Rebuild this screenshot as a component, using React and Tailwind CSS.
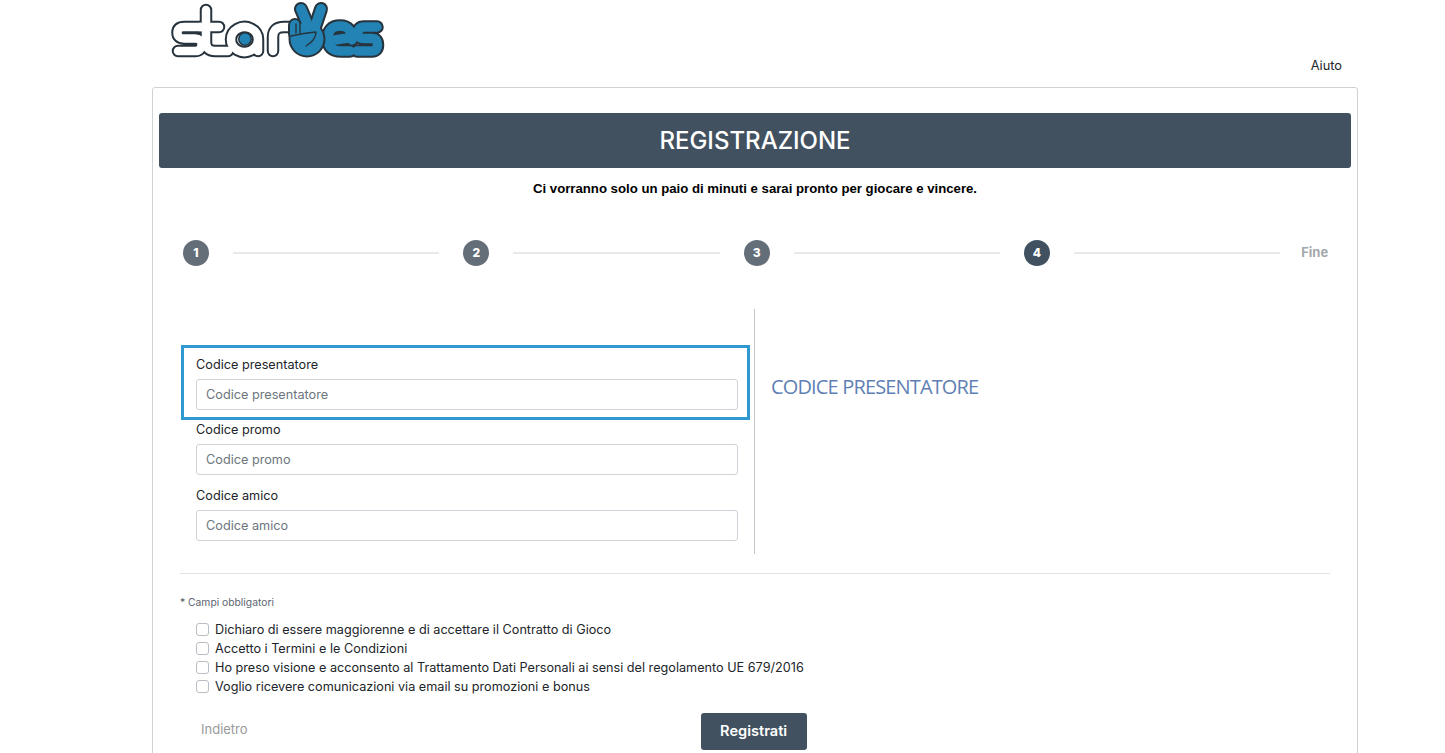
import { Fragment } from "react";

const steps = ["1", "2", "3", "4"];
const agreements = [
  "Dichiaro di essere maggiorenne e di accettare il Contratto di Gioco",
  "Accetto i Termini e le Condizioni",
  "Ho preso visione e acconsento al Trattamento Dati Personali ai sensi del regolamento UE 679/2016",
  "Voglio ricevere comunicazioni via email su promozioni e bonus",
];

function Logo() {
  const star = [
    "M201 27 H184 Q177.5 27 177.5 32.5 Q177.5 38.5 184 38.5 H195 Q201.5 38.5 201.5 44.5 Q201.5 51 195 51 H178",
    "M206 10 V42 Q206 51 215 51 H228",
    "M200 27 H219",
    "M258 39 A13.5 12.5 0 1 0 258 40 V51",
    "M273 51 V37 Q273 27 284 27 H289",
  ];
  const yes = [
    "M348 38 L328 41 M352 40 Q352 26 340 26 Q328 26 328 39 Q328 51 341 51 H350",
    "M377 27 H364 Q358 27 358 33 Q358 38.5 364 38.5 H372 Q377.5 38.5 377.5 45 Q377.5 51 372 51 H357",
  ];
  return (
    <svg width="260" height="70" viewBox="150 0 260 70" fill="none" strokeLinecap="round" strokeLinejoin="round">
      {star.map((d) => <path key={d} d={d} stroke="#27333d" strokeWidth="12.5" />)}
      {star.map((d) => <path key={d} d={d} stroke="#ffffff" strokeWidth="8.5" />)}
      <circle cx="245" cy="39" r="7" fill="#27333d" />
      <circle cx="245" cy="39" r="5.5" fill="#2383b4" />
      {yes.map((d) => <path key={d} d={d} stroke="#27333d" strokeWidth="13.5" />)}
      {yes.map((d) => <path key={d} d={d} stroke="#2383b4" strokeWidth="9.5" />)}
      <g stroke="#27333d" strokeWidth="14">
        <path d="M301 9 L310 30" />
        <path d="M321 9 L314 30" />
        <path d="M295 25 V34" />
      </g>
      <circle cx="307" cy="39" r="18.5" fill="#27333d" />
      <g stroke="#2383b4" strokeWidth="10">
        <path d="M301 9 L310 30" />
        <path d="M321 9 L314 30" />
        <path d="M295 25 V34" />
      </g>
      <circle cx="307" cy="39" r="16.5" fill="#2383b4" />
      <path d="M296 24 V33 M300 22 V33 M291 36 Q304 33 316 32 Q316 40 306 46" stroke="#27333d" strokeWidth="1.4" />
    </svg>
  );
}

function Field({ label }) {
  return (
    <>
      <label className="block text-[12.7px] leading-[20px] text-[#212529]">{label}</label>
      <input
        placeholder={label}
        className="mt-[4px] block h-[31px] w-[542px] rounded-[3px] border border-[#ced4da] bg-white px-[9px] text-[12.7px] placeholder:text-[#6c757d]"
      />
    </>
  );
}

export default function App() {
  return (
    <div className="h-[753px] overflow-hidden bg-white font-['Inter',sans-serif] text-[#212529]">
      <div className="ml-[152px] w-[1206px]">
        <div className="flex h-[87px] justify-between">
          <div className="-ml-[2px]"><Logo /></div>
          <a className="mt-[57px] mr-[16px] h-[18px] text-[12.8px] leading-[18px] text-[#212529]">Aiuto</a>
        </div>

        <div className="h-[800px] rounded-[3px] border border-[#d2d2d2] px-[6px] pt-[25px]">
          <div className="flex h-[55px] items-center justify-center rounded-[3px] bg-[#415160]">
            <h1 className="text-[24px] font-medium text-white">REGISTRAZIONE</h1>
          </div>
          <p className="mt-[12px] text-center font-['Liberation_Sans',sans-serif] text-[13.2px] leading-[17px] font-bold text-black">
            Ci vorranno solo un paio di minuti e sarai pronto per giocare e vincere.
          </p>

          <div className="mt-[43px] ml-[24px] flex h-[26px] w-[1146px] items-center">
            {steps.map((s) => (
              <Fragment key={s}>
                <span className={`flex h-[26px] w-[26px] shrink-0 items-center justify-center rounded-full text-[12px] font-extrabold text-white ${s === "4" ? "bg-[#415160]" : "bg-[#646e78]"}`}>
                  {s}
                </span>
                <span className="mr-[24px] ml-[24px] h-[2px] w-[206.3px] shrink-0 bg-[#e9e9e9]" />
              </Fragment>
            ))}
            <span className="ml-[-3px] text-[13px] font-bold text-[#a3a8ad]">Fine</span>
          </div>

          <div className="mt-[43px] ml-[22px] flex h-[245px]">
            <div className="h-full w-[574px] border-r border-[#c6c6c6] pt-[36px]">
              <div className="h-[75px] w-[569px] border-[3px] border-[#2e9ad0] pt-[7px] pl-[12px]">
                <Field label="Codice presentatore" />
              </div>
              <div className="pl-[15px]">
                <Field label="Codice promo" />
              </div>
              <div className="mt-[11px] pl-[15px]">
                <Field label="Codice amico" />
              </div>
            </div>
            <p className="mt-[64px] ml-[16px] font-['Open_Sans',sans-serif] text-[20px] leading-[27px] tracking-[-0.85px] text-[#5f7fb5]">
              CODICE PRESENTATORE
            </p>
          </div>

          <div className="mt-[19px] ml-[21px] h-px w-[1150px] bg-[#e3e3e3]" />
          <p className="mt-[22px] ml-[21px] text-[10.3px] leading-[12px] text-[#5c6670]">* Campi obbligatori</p>

          <div className="mt-[12px] ml-[37px] flex flex-col">
            {agreements.map((a) => (
              <label key={a} className="flex h-[19px] items-center text-[12.67px] text-[#212529]">
                <input type="checkbox" className="mr-[6px] h-[13px] w-[13px] appearance-none rounded-[3px] border border-[#b9bec5] bg-white" />
                {a}
              </label>
            ))}
          </div>

          <div className="mt-[17px] flex items-center">
            <span className="mb-[4px] ml-[42px] text-[13px] text-[#9a9a9a]">Indietro</span>
            <button className="ml-[453px] h-[37px] w-[106px] rounded-[3px] bg-[#415160] text-[14.6px] font-semibold text-white">
              Registrati
            </button>
          </div>
        </div>
      </div>
    </div>
  );
}
